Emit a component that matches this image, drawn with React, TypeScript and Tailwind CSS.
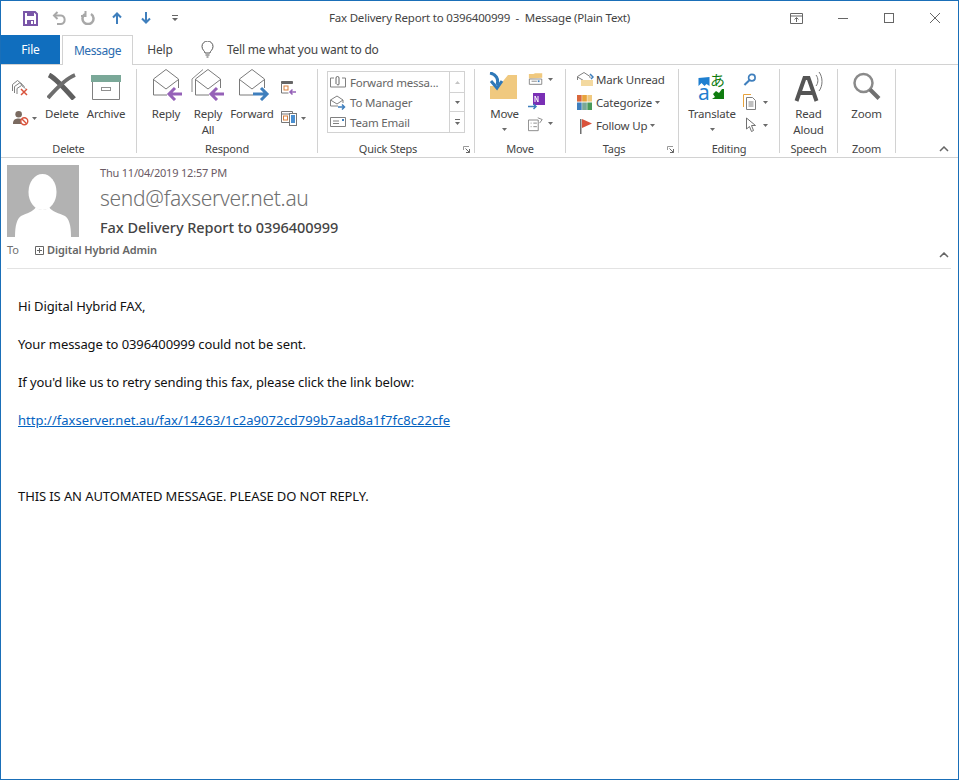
import React from "react";

const Caret = () => (
  <svg width="5" height="3" viewBox="0 0 5 3" className="shrink-0"><path d="M0 0h5L2.500 3z" fill="#6a6a6a" /></svg>
);

const Sep = () => <div className="w-px h-[84px] bg-[#d2d2d2] shrink-0" />;

function Group({ cls, label, launcher, children }: { cls: string; label: string; launcher?: boolean; children: React.ReactNode }) {
  return (
    <div className={`${cls} h-[88px] shrink-0 flex flex-col`}>
      <div className="h-[72px] flex">{children}</div>
      <div className="h-[16px] flex items-center">
        <div className="flex-1 text-center text-[11px] leading-[16px] text-[#444]">{label}</div>
        {launcher && (
          <svg width="7" height="7" viewBox="0 0 7 7" className="ml-[5px] mr-[4px]" fill="none">
            <path d="M.5 4V.5H6" stroke="#999" />
            <path d="M2.500 2.500L6.500 6.500M6.500 3v3.500H3" stroke="#666" />
          </svg>
        )}
      </div>
    </div>
  );
}

function Big({ cls, icon, lines, caret }: { cls: string; icon: React.ReactNode; lines: string[]; caret?: boolean }) {
  return (
    <div className={`${cls} flex flex-col items-center shrink-0`}>
      <div className="h-[37px] w-full flex items-start justify-center pt-[3px]">{icon}</div>
      {lines.map((l) => (
        <div key={l} className="text-[11.5px] leading-[16px] text-[#444] whitespace-nowrap">{l}</div>
      ))}
      {caret && <div className="mt-[6px]"><Caret /></div>}
    </div>
  );
}

const EnvOpen = ({ arrow, all }: { arrow: "reply" | "forward"; all?: boolean }) => (
  <svg width="36" height="32" viewBox="0 0 36 32" fill="none" className="-mt-[3px]">
    {all && <path d="M2 23V10L13 .5" stroke="#8a8a8a" />}
    <path d="M5.500 26V10L18 .5 30.500 10v9M5.500 26H19" stroke="#7a7a7a" />
    <path d="M5.500 10.500L18 20l12.500-9.500" stroke="#7a7a7a" />
    {arrow === "reply" ? (
      <path d="M34 25H21M27 19l-6 6 6 6" stroke="#9561b8" strokeWidth="3" />
    ) : (
      <path d="M19 25h14M27 19l6 6-6 6" stroke="#3f7fbd" strokeWidth="3" />
    )}
  </svg>
);

const Person = () => (
  <svg width="72" height="72" viewBox="0 0 72 72" className="block shrink-0">
    <rect width="72" height="72" fill="#b2b2b2" />
    <ellipse cx="35.500" cy="27" rx="14" ry="18" fill="#fff" />
    <path d="M8 72C8 60 10 54 14 51c6-3 12-4 15-9 3 4 10 4 13 0 3 5 10 6 16 9 4 3 6 9 6 21z" fill="#fff" />
  </svg>
);

function Tag({ icon, label, caret }: { icon: React.ReactNode; label: string; caret?: boolean }) {
  return (
    <div className="h-[23px] flex items-center">
      <div className="w-[19px] flex justify-start shrink-0">{icon}</div>
      <span className="text-[11.5px] text-[#444] whitespace-nowrap">{label}</span>
      {caret && <span className="ml-[3px]"><Caret /></span>}
    </div>
  );
}

function QuickRow({ icon, label }: { icon: React.ReactNode; label: string }) {
  return (
    <div className="h-[20px] flex items-center">
      <div className="w-[22px] pl-[2px] shrink-0 flex">{icon}</div>
      <span className="pt-[2px] text-[11.5px] text-[#666] whitespace-nowrap">{label}</span>
    </div>
  );
}

const Chevron = () => (
  <svg width="10" height="6" viewBox="0 0 10 6" fill="none"><path d="M1 5l4-4 4 4" stroke="#666" strokeWidth="1.500" /></svg>
);

export default function App() {
  const font = { fontFamily: '"Noto Sans", "Open Sans", sans-serif' };
  return (
    <div style={font} className="w-[959px] h-[780px] bg-white border border-[#1a6fb8] flex flex-col overflow-hidden tracking-[-0.2px]">
      {/* Title bar */}
      <div className="h-[34px] flex items-center shrink-0">
        <div className="w-[230px] flex items-center pl-[22px] shrink-0">
          <svg width="15" height="15" viewBox="0 0 15 15" fill="none">
            <path d="M1 1h11l2 2v11H1z" stroke="#7a57a8" strokeWidth="2" />
            <rect x="4" y="1" width="7" height="4" fill="#7a57a8" />
            <rect x="4" y="9" width="7" height="5" fill="#7a57a8" />
            <rect x="8" y="10" width="2" height="3" fill="#fff" />
          </svg>
          <svg width="15" height="14" viewBox="0 0 15 14" fill="none" className="ml-[14px]">
            <path d="M5.500 1L2 4.500 5.500 8" stroke="#a8a8a8" strokeWidth="2" />
            <path d="M2 4.500h7a4.300 4.300 0 0 1 0 8.500H5" stroke="#a8a8a8" strokeWidth="2" />
          </svg>
          <svg width="14" height="14" viewBox="0 0 14 14" fill="none" className="ml-[14px]">
            <path d="M4 3a5.500 5.500 0 1 0 6 0" stroke="#a8a8a8" strokeWidth="2.500" />
            <path d="M4.500 0v5H0" stroke="#a8a8a8" strokeWidth="2" />
          </svg>
          <svg width="10" height="12" viewBox="0 0 10 12" fill="none" className="ml-[17px]">
            <path d="M5 12V2M1 5.500L5 1.500l4 4" stroke="#3f7fbd" strokeWidth="2" />
          </svg>
          <svg width="10" height="12" viewBox="0 0 10 12" fill="none" className="ml-[19px]">
            <path d="M5 0v10M1 6.500l4 4 4-4" stroke="#3f7fbd" strokeWidth="2" />
          </svg>
          <svg width="6" height="6" viewBox="0 0 6 6" className="ml-[21px]">
            <path d="M0 0h6v1H0zM0 3h6L3 6z" fill="#666" />
          </svg>
        </div>
        <div className="flex-1 text-center text-[11.5px] text-[#444] whitespace-pre">Fax Delivery Report to 0396400999  -  Message (Plain Text)</div>
        <div className="w-[230px] flex items-center justify-end shrink-0 pr-[18px]">
          <svg width="13" height="11" viewBox="0 0 13 11" fill="none">
            <path d="M.5.500h12v10H.5zM.5 3h12M6.500 9V5M4.500 6.500l2-2 2 2" stroke="#666" />
          </svg>
          <div className="ml-[35px] w-[10px] h-px bg-[#666]" />
          <div className="ml-[36px] w-[10px] h-[10px] border border-[#666]" />
          <svg width="10" height="10" viewBox="0 0 10 10" fill="none" className="ml-[36px]">
            <path d="M0 0l10 10M10 0L0 10" stroke="#666" />
          </svg>
        </div>
      </div>

      {/* Tabs */}
      <div className="h-[30px] flex items-stretch border-b border-[#d2d2d2] shrink-0">
        <div className="w-[59px] bg-[#106ebe] text-white text-[12px] flex items-center justify-center">File</div>
        <div className="ml-[2px] w-[71px] h-[30px] bg-white border border-b-0 border-[#d2d2d2] text-[#2b6cb0] text-[12px] tracking-[-0.4px] flex items-center justify-center">Message</div>
        <div className="w-[54px] text-[#444] text-[12px] flex items-center justify-center">Help</div>
        <div className="ml-[14px] flex items-center">
          <svg width="13" height="17" viewBox="0 0 13 17" fill="none">
            <path d="M4 12c0-2-3-3-3-6.500a5.500 5.500 0 0 1 11 0C12 9 9 10 9 12zM4.500 14h4M5.500 16h2" stroke="#555" />
          </svg>
          <span className="ml-[13px] text-[12px] tracking-[-0.25px] text-[#444]">Tell me what you want to do</span>
        </div>
      </div>

      {/* Ribbon */}
      <div className="h-[93px] pt-[4px] flex border-b border-[#d2d2d2] shrink-0">
        <Group cls="w-[135px]" label="Delete">
          <div className="w-[34px] ml-[8px] shrink-0 flex flex-col">
            <div className="h-[41px] pt-[10px] pl-[3px]">
              <svg width="17" height="17" viewBox="0 0 17 17" fill="none">
                <path d="M.5 12V5.500l5-4 5 4M2.500 14V7.500l5-3.500 5 3.500M5 15V9.500l4.500-3 4 3" stroke="#808080" />
                <path d="M9 10l6 6M15 10l-6 6" stroke="#d9533c" strokeWidth="1.500" />
              </svg>
            </div>
            <div className="flex items-center pl-[4px]">
              <svg width="16" height="16" viewBox="0 0 17 17" fill="none">
                <circle cx="6" cy="4.500" r="3.500" fill="#7a6a60" />
                <path d="M0 14c0-4 3-5 6-5s5 1 5 3v3H0z" fill="#7a6a60" />
                <circle cx="12" cy="12" r="3.700" fill="#fff" stroke="#d9533c" strokeWidth="1.500" />
                <path d="M9.500 9.500l5 5" stroke="#d9533c" strokeWidth="1.500" />
              </svg>
              <span className="ml-[3px]"><Caret /></span>
            </div>
          </div>
          <Big cls="w-[38px]" lines={["Delete"]} icon={
            <svg width="30" height="27" viewBox="0 0 30 27" fill="none" className="mt-[1px]">
              <path d="M2 2c6 3 18 16 25 24" stroke="#5f5f5f" strokeWidth="5" />
              <path d="M28 2C20 5 8 17 1 25" stroke="#6e6e6e" strokeWidth="4" />
            </svg>
          } />
          <Big cls="w-[50px]" lines={["Archive"]} icon={
            <svg width="30" height="25" viewBox="0 0 30 25" fill="none" className="mt-[3px]">
              <rect x="0" y="0" width="30" height="7" fill="#7aa898" />
              <path d="M1.500 7v17.500h27V7" stroke="#808080" />
              <rect x="10.500" y="12.500" width="9" height="3" stroke="#909090" />
            </svg>
          } />
        </Group>
        <Sep />
        <Group cls="w-[180px]" label="Respond">
          <Big cls="w-[40px] ml-[9px]" lines={["Reply"]} icon={<EnvOpen arrow="reply" />} />
          <Big cls="w-[44px]" lines={["Reply", "All"]} icon={<EnvOpen arrow="reply" all />} />
          <Big cls="w-[44px]" lines={["Forward"]} icon={<EnvOpen arrow="forward" />} />
          <div className="w-[36px] pl-[7px] pt-[12px] flex flex-col gap-[16px]">
            <svg width="16" height="14" viewBox="0 0 16 14" fill="none">
              <path d="M.5.500h11v2H.5z" fill="#666" stroke="#666" />
              <path d="M.5 3v9h7" stroke="#777" />
              <rect x="3" y="5" width="4" height="4" stroke="#d9803c" />
              <path d="M15 11H9M11.500 8.500L9 11l2.500 2.500" stroke="#9561b8" strokeWidth="1.500" />
            </svg>
            <div className="flex items-center">
              <svg width="17" height="15" viewBox="0 0 17 15" fill="none">
                <path d="M.5.500h11v11H.5zM.5 3h11" stroke="#777" />
                <rect x="2.500" y="5" width="4" height="4" stroke="#d9803c" />
                <rect x="8.500" y="2.500" width="7" height="12" fill="#fff" stroke="#777" />
                <rect x="10" y="4" width="4" height="8" fill="#4a8fd0" />
              </svg>
              <span className="ml-[3px]"><Caret /></span>
            </div>
          </div>
        </Group>
        <Sep />
        <Group cls="w-[156px]" label="Quick Steps" launcher>
          <div className="ml-[9px] mt-[2px] w-[138px] h-[62px] border border-[#d2d2d2] flex">
            <div className="w-[121px] flex flex-col">
              <QuickRow label="Forward messa..." icon={
                <svg width="16" height="15" viewBox="0 0 16 15" fill="none">
                  <path d="M4 3H.5v9h15V3H12" stroke="#808080" />
                  <path d="M6 9V3a1.500 1.500 0 0 1 3 0v6a1 1 0 0 1-2 0" stroke="#666" />
                </svg>
              } />
              <QuickRow label="To Manager" icon={
                <svg width="16" height="15" viewBox="0 0 16 15" fill="none">
                  <path d="M.5 11V5L7 1l6 4v3M.5 11H8M.5 5L7 9l6-4" stroke="#808080" />
                  <path d="M8 12h6M12 9.500l2.500 2.500-2.500 2.500" stroke="#3f7fbd" strokeWidth="1.500" />
                </svg>
              } />
              <QuickRow label="Team Email" icon={
                <svg width="16" height="11" viewBox="0 0 16 11" fill="none">
                  <path d="M.5.500h15v9H.5zM3 4h6M3 6.500h6" stroke="#808080" />
                  <rect x="12" y="2" width="2" height="2" fill="#3f7fbd" />
                </svg>
              } />
            </div>
            <div className="flex-1 border-l border-[#d2d2d2] flex flex-col">
              <div className="h-[20px] flex items-center justify-center"><svg width="5" height="3" viewBox="0 0 5 3"><path d="M0 3h5L2.500 0z" fill="#c4c4c4" /></svg></div>
              <div className="h-[20px] border-y border-[#d2d2d2] flex items-center justify-center"><Caret /></div>
              <div className="flex-1 flex flex-col items-center justify-center gap-[2px]"><div className="w-[5px] h-px bg-[#6a6a6a]" /><Caret /></div>
            </div>
          </div>
        </Group>
        <Sep />
        <Group cls="w-[90px]" label="Move">
          <Big cls="w-[39px] ml-[10px]" lines={["Move"]} caret icon={
            <svg width="30" height="29" viewBox="0 0 30 29" fill="none" className="-ml-[3px]">
              <path d="M2 14h9l9-11h9v24H2z" fill="#f0c97f" />
              <path d="M2 1c6 1 9 6 7 12" stroke="#2f78b8" strokeWidth="3" />
              <path d="M3 9l6 7 5-7" stroke="#2f78b8" strokeWidth="3" />
            </svg>
          } />
          <div className="ml-[4px] flex flex-col pt-[2px] gap-[5px]">
            <div className="flex items-center h-[16px]">
              <svg width="16" height="16" viewBox="0 0 18 15" fill="none">
                <path d="M1 7V2h5l2-1h8v5" fill="#f0c97f" />
                <path d="M1.500 7.500h14v6h-14zM4 10h6" stroke="#808080" />
                <rect x="11" y="9" width="2" height="2" fill="#3f7fbd" />
              </svg>
              <span className="ml-[4px]"><Caret /></span>
            </div>
            <div className="h-[18px] flex items-center">
              <svg width="17" height="17" viewBox="0 0 17 17" fill="none">
                <rect x="5" y="0" width="12" height="12" fill="#7a2fb5" />
                <path d="M7 9V3l3 6V3" stroke="#fff" />
                <path d="M0 13.500h8M5.500 11L8 13.500 5.500 16" stroke="#3f7fbd" strokeWidth="1.500" />
              </svg>
            </div>
            <div className="flex items-center h-[17px]">
              <svg width="16" height="16" viewBox="0 0 18 16" fill="none">
                <path d="M.5 3.500h11v12H.5zM3 7h1M6 7h4M3 11h1M6 11h4M11 1l5 2-3 4" stroke="#808080" />
              </svg>
              <span className="ml-[4px]"><Caret /></span>
            </div>
          </div>
        </Group>
        <Sep />
        <Group cls="w-[112px]" label="Tags" launcher>
          <div className="pl-[11px] flex flex-col -mt-[1px]">
            <Tag label="Mark Unread" icon={
              <svg width="17" height="15" viewBox="0 0 17 15" fill="none">
                <path d="M.5 8V4.500L7 .5l6 4V6M.5 5l6 3.500" stroke="#808080" />
                <path d="M4 8h12v6H4z" fill="#f3d9a0" />
                <path d="M13 2l3 3-2 2" stroke="#3f7fbd" strokeWidth="1.500" />
              </svg>
            } />
            <Tag label="Categorize" caret icon={
              <svg width="15" height="15" viewBox="0 0 16 16">
                <rect x="0" y="0" width="5" height="7" fill="#d9683c" />
                <rect x="5.500" y="0" width="5" height="7" fill="#e8a33c" />
                <rect x="11" y="0" width="5" height="7" fill="#f0c97f" />
                <rect x="0" y="8" width="5" height="8" fill="#3f7fbd" />
                <rect x="5.500" y="8" width="5" height="8" fill="#7aa898" />
                <rect x="11" y="8" width="5" height="8" fill="#4a9a5a" />
              </svg>
            } />
            <Tag label="Follow Up" caret icon={
              <svg width="16" height="16" viewBox="0 0 16 16">
                <rect x="3" y="1" width="1.500" height="15" fill="#707070" />
                <path d="M5 1l10 4.500L5 10z" fill="#d9533c" />
              </svg>
            } />
          </div>
        </Group>
        <Sep />
        <Group cls="w-[100px]" label="Editing">
          <Big cls="w-[46px] ml-[10px]" lines={["Translate"]} caret icon={
            <svg width="28" height="30" viewBox="0 0 28 30" fill="none" className="overflow-visible">
              <path d="M.5 5l11-1v9l-3-2-2 2-3-3-3 3z" fill="#1f7fd0" transform="translate(0 1)" />
              <text x="12" y="14" fontSize="15" fill="#107c10" fontFamily="Noto Sans CJK JP">あ</text>
              <text x="0" y="28" fontSize="21" fill="#1f7fd0" fontFamily="Noto Sans">a</text>
              <path d="M26 17v10H14l3-2-2-3 3-3 3 2 3-4z" fill="#107c10" />
            </svg>
          } />
          <div className="ml-[8px] flex flex-col pt-[4px]">
            <div className="h-[14px] flex">
              <svg width="14" height="13" viewBox="0 0 14 14" fill="none">
                <circle cx="9" cy="5" r="3.500" stroke="#3f7fbd" strokeWidth="1.800" />
                <path d="M6 8l-5 5" stroke="#3f7fbd" strokeWidth="2.200" />
              </svg>
            </div>
            <div className="mt-[7px] h-[17px] flex items-center">
              <svg width="14" height="17" viewBox="0 0 14 17" fill="none">
                <path d="M.5 13V.5H8" stroke="#e8a33c" />
                <path d="M3.500 3.500h6l3 3v9h-9zM5.500 8h5M5.500 10h5M5.500 12h5" stroke="#808080" />
              </svg>
              <span className="ml-[6px]"><Caret /></span>
            </div>
            <div className="mt-[6px] h-[16px] flex items-center">
              <svg width="14" height="16" viewBox="0 0 14 16" fill="none">
                <path d="M3.500 1v11l3-2.500 2 5 2-1-2-5h4z" stroke="#707070" fill="#fff" />
              </svg>
              <span className="ml-[6px]"><Caret /></span>
            </div>
          </div>
        </Group>
        <Sep />
        <Group cls="w-[57px]" label="Speech">
          <Big cls="w-full" lines={["Read", "Aloud"]} icon={
            <svg width="30" height="29" viewBox="0 0 30 29" fill="none" className="overflow-visible">
              <path d="M2.500 29L10.500 6h4l8 23M6 21h13" stroke="#555" strokeWidth="4" />
              <path d="M22 3c2.500 3 2.500 8 0 11M25 0c4 5 4 14 0 19" stroke="#777" />
            </svg>
          } />
        </Group>
        <Sep />
        <Group cls="w-[57px]" label="Zoom">
          <Big cls="w-full" lines={["Zoom"]} icon={
            <svg width="28" height="28" viewBox="0 0 28 28" fill="none">
              <circle cx="10.500" cy="11" r="9" stroke="#8a8a8a" strokeWidth="2.500" />
              <path d="M17 17.500L26 26.500" stroke="#707070" strokeWidth="4" />
            </svg>
          } />
        </Group>
        <Sep />
        <div className="flex-1 flex justify-end items-end pr-[9px] pb-[5px] h-[88px]">
          <Chevron />
        </div>
      </div>

      {/* Message header */}
      <div className="ml-[6px] mr-[7px] shrink-0 border-b border-[#e3e3e3] pb-[9px]">
        <div className="flex pt-[7px]">
          <Person />
          <div className="ml-[21px]">
            <div className="text-[11px] leading-[15px] text-[#6a5a64]">Thu 11/04/2019 12:57 PM</div>
            <div className="text-[21px] leading-[27px] mt-[5px] text-[#707070] font-light tracking-[-0.3px]">send@faxserver.net.au</div>
            <div className="text-[14.5px] leading-[20px] mt-[5px] text-[#444] font-medium tracking-[-0.05px]">Fax Delivery Report to 0396400999</div>
          </div>
        </div>
        <div className="flex items-center h-[17px] mt-[5px]">
          <span className="w-[28px] text-[11px] text-[#707070]">To</span>
          <svg width="9" height="9" viewBox="0 0 9 9" fill="none" className="shrink-0"><path d="M.5.500h8v8h-8zM2 4.500h5M4.500 2v5" stroke="#666" /></svg>
          <span className="ml-[3px] text-[11px] font-semibold text-[#666] tracking-[-0.1px]">Digital Hybrid Admin</span>
          <div className="flex-1 flex justify-end pr-[2px] pt-[8px]">
            <Chevron />
          </div>
        </div>
      </div>

      {/* Body */}
      <div className="pl-[17px] pt-[28px] text-[13px] leading-[19px] text-[#111] flex flex-col tracking-[-0.1px]">
        <div className="h-[38px]">Hi Digital Hybrid FAX,</div>
        <div className="h-[38px]">Your message to 0396400999 could not be sent.</div>
        <div className="h-[38px]">If you'd like us to retry sending this fax, please click the link below:</div>
        <div className="h-[76px]"><a href="#" className="text-[#0563c1] underline tracking-[0.03px]">http://faxserver.net.au/fax/14263/1c2a9072cd799b7aad8a1f7fc8c22cfe</a></div>
        <div>THIS IS AN AUTOMATED MESSAGE. PLEASE DO NOT REPLY.</div>
      </div>
    </div>
  );
}
